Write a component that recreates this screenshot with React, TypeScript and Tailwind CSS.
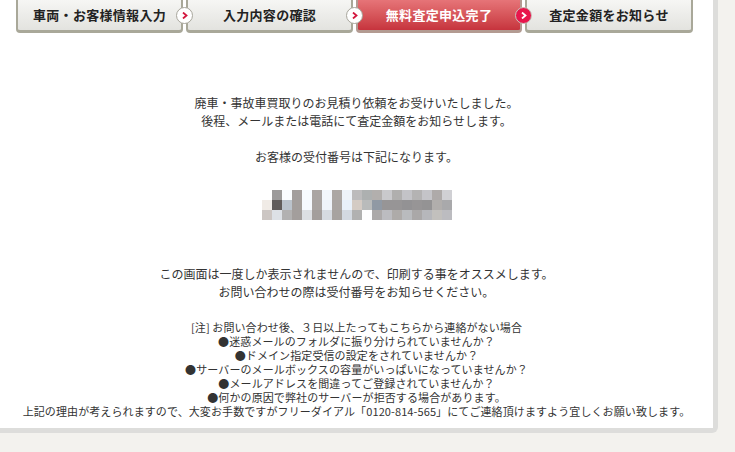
import React from 'react';

const steps = [
  { label: '車両・お客様情報入力', active: false, w: 'w-[167px]' },
  { label: '入力内容の確認', active: false, w: 'w-[167px]' },
  { label: '無料査定申込完了', active: true, w: 'w-[166px]' },
  { label: '査定金額をお知らせ', active: false, w: 'w-[168px]' },
];

// mosaic of the hidden reception number
const mosaic = [
  ['#ffffff', '#9c9a9a', '#fafcff', '#a39e9d', '#f7fbff', '#aaa5a3', '#f3f7fc', '#aca7a4', '#eef3f9', '#bcbbbc', '#adb0b0', '#b2afad', '#c9c9cc', '#b0afae', '#c3c3c7', '#b4b3b3', '#c4c4c8', '#aeaaa9', '#d0d0d4'],
  ['#f0ebe6', '#615c5a', '#bbc3cc', '#a39e9c', '#f5f9ff', '#a8a3a1', '#eef3fa', '#a9a4a2', '#e8f0fa', '#d4cbc4', '#b9bbbb', '#9099a4', '#979596', '#979596', '#939294', '#979596', '#949394', '#b1aeac', '#a9a9ab'],
  ['#ccc6c3', '#dde1e6', '#b2b1b1', '#a39e9c', '#dcdfe3', '#a39e9c', '#d6dbe1', '#a7a3a0', '#d3d9e1', '#b1b1b1', '#fefeff', '#aca9a9', '#bcbcc0', '#aeaba9', '#b9bbbe', '#aaa8a8', '#b6b7bb', '#c2c0bd', '#bcbcc0'],
];

const notes = [
  '[注] お問い合わせ後、３日以上たってもこちらから連絡がない場合',
  '●迷惑メールのフォルダに振り分けられていませんか？',
  '●ドメイン指定受信の設定をされていませんか？',
  '●サーバーのメールボックスの容量がいっぱいになっていませんか？',
  '●メールアドレスを間違ってご登録されていませんか？',
  '●何かの原因で弊社のサーバーが拒否する場合があります。',
  '上記の理由が考えられますので、大変お手数ですがフリーダイアル「0120-814-565」にてご連絡頂けますよう宜しくお願い致します。',
];

const Arrow = ({ active }: { active: boolean }) => (
  <div
    className={`absolute right-[-10px] top-[7px] z-10 w-[17px] h-[17px] rounded-full border flex items-center justify-center ${
      active ? 'bg-[#e8164c] border-[#c9c5bd]' : 'bg-white border-[#a8a69c]'
    }`}
  >
    <svg width="6" height="7" viewBox="0 0 6 7">
      <path d="M1 0.5 L4.5 3.5 L1 6.5" fill="none" stroke={active ? '#ffffff' : '#d3173f'} strokeWidth="1.8" />
    </svg>
  </div>
);

export default function App() {
  return (
    <div
      className="w-[735px] h-[452px] bg-[#f3f2ee] overflow-hidden text-[#333]"
      style={{ fontFamily: '"Noto Sans CJK JP", "Noto Sans", sans-serif' }}
    >
      <div className="w-[718px] bg-white border-r-[5px] border-b-[5px] border-[#dddddb] rounded-br-[6px] pb-[10px]">
        {/* step tabs */}
        <div className="flex gap-[3px] pl-[16px]">
          {steps.map((s, i) => (
            <div key={s.label} className={`relative ${s.w} h-[33px]`}>
              <div
                className={`h-full flex items-center justify-center border-x-2 border-b-[3px] rounded-b-[4px] text-[13px] font-bold tracking-[0.3px] ${
                  s.active
                    ? 'bg-gradient-to-b from-[#e67478] to-[#c6333d] text-white border-[#b39b92]'
                    : 'bg-gradient-to-b from-[#f6f6f4] to-[#e3e3df] text-[#222] border-[#a9a899]'
                }`}
              >
                {s.label}
              </div>
              {i < steps.length - 1 && <Arrow active={s.active} />}
            </div>
          ))}
        </div>

        {/* message */}
        <div className="flex flex-col items-center text-[12px] leading-[18px] mt-[61px]">
          <p>廃車・事故車買取りのお見積り依頼をお受けいたしました。</p>
          <p>後程、メールまたは電話にて査定金額をお知らせします。</p>
          <p className="mt-[18px]">お客様の受付番号は下記になります。</p>
        </div>

        <div className="flex justify-center mt-[24px]">
          <div className="flex flex-col">
            {mosaic.map((row, r) => (
              <div key={r} className="flex">
                {row.map((c, k) => (
                  <div key={k} className="w-[10px] h-[10px]" style={{ backgroundColor: c }} />
                ))}
              </div>
            ))}
          </div>
        </div>

        <div className="flex flex-col items-center text-[12px] leading-[18px] mt-[45px]">
          <p>この画面は一度しか表示されませんので、印刷する事をオススメします。</p>
          <p>お問い合わせの際は受付番号をお知らせください。</p>
        </div>

        <div className="flex flex-col items-center text-[11px] leading-[14px] tracking-[0.1px] mt-[19px]">
          {notes.map((n) => (
            <p key={n}>{n}</p>
          ))}
        </div>
      </div>
    </div>
  );
}
